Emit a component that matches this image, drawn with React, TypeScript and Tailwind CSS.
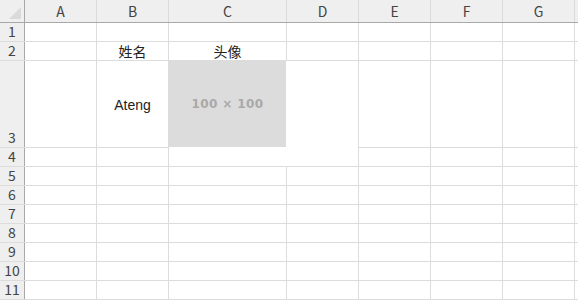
const cols = [
  { key: "", w: 25 },
  { key: "A", w: 72 },
  { key: "B", w: 72 },
  { key: "C", w: 118 },
  { key: "D", w: 72 },
  { key: "E", w: 72 },
  { key: "F", w: 72 },
  { key: "G", w: 72 },
];

const rows = [
  { n: 1, h: 19 },
  { n: 2, h: 19 },
  { n: 3, h: 87 },
  { n: 4, h: 19 },
  { n: 5, h: 19 },
  { n: 6, h: 19 },
  { n: 7, h: 19 },
  { n: 8, h: 19 },
  { n: 9, h: 19 },
  { n: 10, h: 19 },
  { n: 11, h: 19 },
];

const cells: Record<string, string> = {
  B2: "姓名",
  C2: "头像",
  B3: "Ateng",
};

export default function App() {
  return (
    <div
      className="relative h-[300px] w-[578px] overflow-hidden bg-white text-[14px] text-[#222]"
      style={{ fontFamily: '"Noto Sans CJK SC", "Liberation Sans", sans-serif' }}
    >
      {/* column header */}
      <div className="flex h-[23px] border-b border-[#a8a8a8] bg-[#efefef]">
        <div className="relative w-[25px] shrink-0 border-r border-[#a8a8a8]">
          <svg className="absolute bottom-[3px] right-[3px]" width="12" height="12" viewBox="0 0 12 12">
            <polygon points="12,0 12,12 0,12" fill="#dadada" />
          </svg>
        </div>
        {cols.slice(1).map((c) => (
          <div
            key={c.key}
            className="flex shrink-0 items-center justify-center border-r border-[#dadada] text-[#444]"
            style={{ width: c.w }}
          >
            {c.key}
          </div>
        ))}
        <div className="flex-1" />
      </div>

      {/* body rows */}
      {rows.map((r) => (
        <div key={r.n} className="flex border-b border-[#dcdcdc]" style={{ height: r.h }}>
          <div className="flex w-[25px] shrink-0 items-end justify-center border-r border-[#a8a8a8] bg-[#efefef] pb-px leading-[17px] text-[#444]">
            {r.n}
          </div>
          {cols.slice(1).map((c) => (
            <div
              key={c.key}
              className="flex shrink-0 items-center justify-center border-r border-[#dcdcdc] pt-[2px] leading-none"
              style={{ width: c.w, fontFamily: '"Liberation Sans", "Noto Sans CJK SC", sans-serif' }}
            >
              {cells[c.key + r.n] ?? ""}
            </div>
          ))}
          <div className="flex-1" />
        </div>
      ))}

      {/* picture overlay */}
      <div className="absolute left-[169px] top-[61px] h-[105px] w-[189px] bg-white">
        <div className="flex h-[86px] w-[117px] items-center justify-center bg-[#dcdcdc]">
          <span
            className="text-[12px] font-bold tracking-[0.4px] text-[#a9a9a9]"
            style={{ fontFamily: '"DejaVu Sans", sans-serif' }}
          >
            100 × 100
          </span>
        </div>
      </div>
    </div>
  );
}
